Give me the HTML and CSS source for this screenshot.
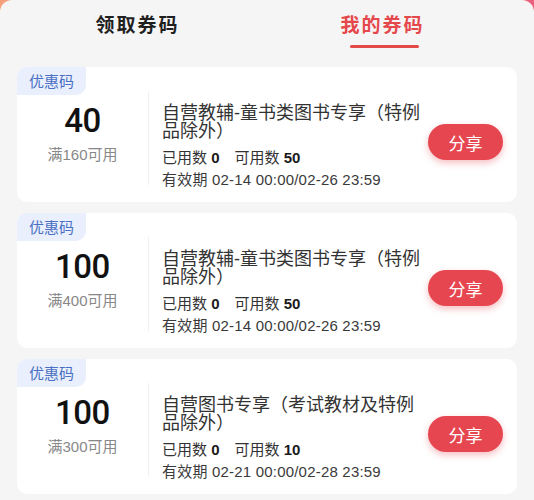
FILE: index.html
```html
<!DOCTYPE html>
<html lang="zh-CN">
<head>
<meta charset="utf-8">
<title>我的券码</title>
<link rel="stylesheet" href="styles.css">
</head>
<body>
<div class="sheet">
  <nav class="tabs">
    <div class="tab">领取券码</div>
    <div class="tab active">我的券码</div>
  </nav>
  <div class="list">
    <div class="card">
      <span class="badge">优惠码</span>
      <div class="left">
        <div class="amount">40</div>
        <div class="cond">满160可用</div>
      </div>
      <div class="divider"></div>
      <div class="info">
        <div class="title">自营教辅-童书类图书专享（特例品除外）</div>
        <div class="stats">已用数 <b>0</b><span class="avail">可用数 <b>50</b></span></div>
        <div class="date">有效期 02-14 00:00/02-26 23:59</div>
      </div>
      <button class="share">分享</button>
    </div>
    <div class="card">
      <span class="badge">优惠码</span>
      <div class="left">
        <div class="amount">100</div>
        <div class="cond">满400可用</div>
      </div>
      <div class="divider"></div>
      <div class="info">
        <div class="title">自营教辅-童书类图书专享（特例品除外）</div>
        <div class="stats">已用数 <b>0</b><span class="avail">可用数 <b>50</b></span></div>
        <div class="date">有效期 02-14 00:00/02-26 23:59</div>
      </div>
      <button class="share">分享</button>
    </div>
    <div class="card">
      <span class="badge">优惠码</span>
      <div class="left">
        <div class="amount">100</div>
        <div class="cond">满300可用</div>
      </div>
      <div class="divider"></div>
      <div class="info">
        <div class="title">自营图书专享（考试教材及特例品除外）</div>
        <div class="stats">已用数 <b>0</b><span class="avail">可用数 <b>10</b></span></div>
        <div class="date">有效期 02-21 00:00/02-28 23:59</div>
      </div>
      <button class="share">分享</button>
    </div>
  </div>
</div>
</body>
</html>
```

FILE: styles.css
```css
html, body {
  margin: 0;
  padding: 0;
}
body {
  background: linear-gradient(90deg, #f5a07a 0%, #f08a7a 50%, #ea5f7c 100%);
  font-family: "Liberation Sans", "Noto Sans CJK SC", sans-serif;
  color: #333;
  height: 500px;
  overflow: hidden;
}
.sheet {
  background: #f5f5f5;
  border-radius: 12px 12px 0 0;
  min-height: 500px;
}
.tabs {
  display: flex;
  gap: 124px;
  padding-left: 77px;
  height: 67px;
  box-sizing: border-box;
}
.tab {
  width: 121px;
  text-align: center;
  font-family: "Noto Sans CJK SC", sans-serif;
  font-size: 19px;
  font-weight: 700;
  letter-spacing: 2px;
  line-height: 26px;
  padding-top: 11px;
  color: #1f1f1f;
  position: relative;
}
.tab.active {
  color: #e5484b;
}
.tab.active::after {
  content: "";
  position: absolute;
  left: 28px;
  top: 45px;
  width: 69px;
  height: 3px;
  border-radius: 2px;
  background: #e24a48;
}
.list {
  display: flex;
  flex-direction: column;
  gap: 11px;
  padding: 0 17px;
}
.card {
  position: relative;
  display: flex;
  align-items: flex-start;
  height: 135px;
  background: #fff;
  border-radius: 10px;
}
.badge {
  position: absolute;
  left: 0;
  top: 0;
  width: 69px;
  height: 28px;
  line-height: 28px;
  text-align: center;
  background: #e9effc;
  color: #4a6fc4;
  font-family: "Noto Sans CJK SC", sans-serif;
  font-size: 15px;
  border-radius: 10px 0 10px 0;
}
.left {
  width: 131px;
  padding-top: 34px;
  text-align: center;
}
.amount {
  font-family: Roboto, "Liberation Sans", sans-serif;
  font-size: 33px;
  font-weight: 500;
  line-height: 40px;
  color: #111;
  letter-spacing: -0.5px;
}
.cond {
  margin-top: 4px;
  font-size: 15px;
  line-height: 20px;
  color: #888;
}
.divider {
  width: 1px;
  align-self: stretch;
  margin: 24px 0 17px;
  background: #f1f1f1;
}
.info {
  flex: 1;
  padding: 37px 0 0 13px;
  min-width: 0;
}
.title {
  font-size: 18px;
  line-height: 18px;
  color: #333;
}
.stats {
  margin-top: 7px;
  font-size: 15px;
  line-height: 22px;
  color: #333;
}
.stats b {
  color: #1a1a1a;
  font-weight: 700;
}
.avail {
  margin-left: 15px;
}
.date {
  font-size: 15px;
  line-height: 22px;
  color: #3a3a3a;
  letter-spacing: 0.2px;
}
.share {
  margin: 57px 14px 0 2px;
  width: 75px;
  height: 36px;
  border: 0;
  border-radius: 18px;
  background: #e6464f;
  color: #fff;
  font-family: "Noto Sans CJK SC", sans-serif;
  font-size: 17px;
  padding: 0;
  box-shadow: 0 3px 7px rgba(230, 70, 79, 0.35);
}
```
